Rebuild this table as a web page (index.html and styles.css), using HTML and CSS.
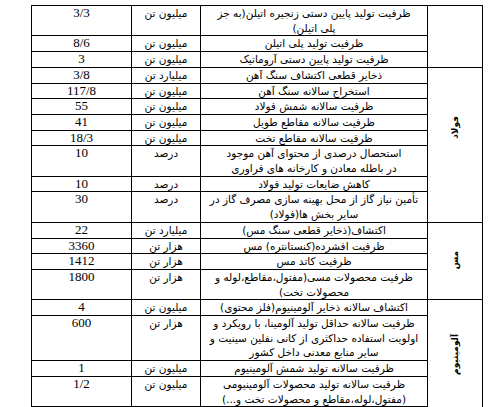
FILE: index.html
```html
<!DOCTYPE html>
<html lang="fa">
<head>
<meta charset="utf-8">
<title>جدول اهداف</title>
<link rel="stylesheet" href="styles.css">
</head>
<body>
<table class="grid" dir="rtl">
  <colgroup>
    <col class="c-cat">
    <col class="c-desc">
    <col class="c-unit">
    <col class="c-val">
  </colgroup>
  <tbody>
    <tr>
      <td class="cat" rowspan="3"></td>
      <td class="desc">ظرفیت تولید پایین دستی زنجیره اتیلن(به جز<br>پلی اتیلن)</td>
      <td class="unit">میلیون تن</td>
      <td class="val">3/3</td>
    </tr>
    <tr>
      <td class="desc">ظرفیت تولید پلی اتیلن</td>
      <td class="unit">میلیون تن</td>
      <td class="val">8/6</td>
    </tr>
    <tr>
      <td class="desc">ظرفیت تولید پایین دستی آروماتیک</td>
      <td class="unit">میلیون تن</td>
      <td class="val">3</td>
    </tr>
    <tr>
      <td class="cat cat-steel" rowspan="8"><span class="vlabel">فولاد</span></td>
      <td class="desc">ذخایر قطعی اکتشاف سنگ آهن</td>
      <td class="unit">میلیارد تن</td>
      <td class="val">3/8</td>
    </tr>
    <tr>
      <td class="desc">استخراج سالانه سنگ آهن</td>
      <td class="unit">میلیون تن</td>
      <td class="val">117/8</td>
    </tr>
    <tr>
      <td class="desc">ظرفیت سالانه شمش فولاد</td>
      <td class="unit">میلیون تن</td>
      <td class="val">55</td>
    </tr>
    <tr>
      <td class="desc">ظرفیت سالانه مقاطع طویل</td>
      <td class="unit">میلیون تن</td>
      <td class="val">41</td>
    </tr>
    <tr>
      <td class="desc">ظرفیت سالانه مقاطع تخت</td>
      <td class="unit">میلیون تن</td>
      <td class="val">18/3</td>
    </tr>
    <tr>
      <td class="desc">استحصال درصدی از محتوای آهن موجود<br>در باطله معادن و کارخانه های فراوری</td>
      <td class="unit">درصد</td>
      <td class="val">10</td>
    </tr>
    <tr>
      <td class="desc">کاهش ضایعات تولید فولاد</td>
      <td class="unit">درصد</td>
      <td class="val">10</td>
    </tr>
    <tr>
      <td class="desc">تأمین نیاز گاز از محل بهینه سازی مصرف گاز در<br>سایر بخش ها(فولاد)</td>
      <td class="unit">درصد</td>
      <td class="val">30</td>
    </tr>
    <tr>
      <td class="cat" rowspan="4"><span class="vlabel">مس</span></td>
      <td class="desc">اکتشاف(ذخایر قطعی سنگ مس)</td>
      <td class="unit">میلیارد تن</td>
      <td class="val">22</td>
    </tr>
    <tr>
      <td class="desc">ظرفیت افشرده(کنستانتره) مس</td>
      <td class="unit">هزار تن</td>
      <td class="val">3360</td>
    </tr>
    <tr>
      <td class="desc">ظرفیت کاتد مس</td>
      <td class="unit">هزار تن</td>
      <td class="val">1412</td>
    </tr>
    <tr>
      <td class="desc">ظرفیت محصولات مسی(مفتول،مقاطع،لوله و<br>محصولات تخت)</td>
      <td class="unit">هزار تن</td>
      <td class="val">1800</td>
    </tr>
    <tr>
      <td class="cat cat-alu" rowspan="5"><span class="vlabel">آلومینیوم</span></td>
      <td class="desc">اکتشاف سالانه ذخایر آلومینیوم(فلز محتوی)</td>
      <td class="unit">میلیون تن</td>
      <td class="val">4</td>
    </tr>
    <tr>
      <td class="desc">ظرفیت سالانه حداقل تولید آلومینا، با رویکرد و<br>اولویت استفاده حداکثری از کانی نفلین سینیت و<br>سایر منابع معدنی داخل کشور</td>
      <td class="unit">هزار تن</td>
      <td class="val">600</td>
    </tr>
    <tr>
      <td class="desc">ظرفیت سالانه تولید شمش آلومینیوم</td>
      <td class="unit">میلیون تن</td>
      <td class="val">1</td>
    </tr>
    <tr>
      <td class="desc">ظرفیت سالانه تولید محصولات آلومینیومی<br>(مفتول،لوله،مقاطع و محصولات تخت و...)</td>
      <td class="unit">میلیون تن</td>
      <td class="val">1/2</td>
    </tr>
    <tr>
      <td class="desc">کاهش مصرف انرژی در تولید آلومینیوم</td>
      <td class="unit">درصد</td>
      <td class="val">20</td>
    </tr>
  </tbody>
</table>
</body>
</html>
```
FILE: styles.css
```css
html, body {
  margin: 0;
  padding: 0;
  background: #fff;
  overflow: hidden;
}

.grid {
  border-collapse: collapse;
  table-layout: fixed;
  width: 452px;
  margin: 5px 0 0 31px;
  color: #000;
}

.c-cat { width: 55px; }
.c-desc { width: 227px; }
.c-unit { width: 69px; }
.c-val { width: 100px; }

.grid td {
  border: 1px solid #000;
  padding: 0;
  vertical-align: top;
  text-align: center;
  line-height: 14.7px;
}

.desc,
.unit {
  font-family: "DejaVu Sans", sans-serif;
  font-size: 10.5px;
  white-space: nowrap;
}

.val {
  font-family: "Liberation Serif", "Times New Roman", serif;
  font-size: 13px;
}

.grid td.cat {
  vertical-align: middle;
}

.grid td.cat-steel {
  padding-bottom: 32px;
}

.grid td.cat-alu {
  padding-bottom: 10px;
}

.vlabel {
  display: inline-block;
  writing-mode: vertical-rl;
  transform: rotate(180deg);
  font-family: "DejaVu Sans", sans-serif;
  font-weight: bold;
  font-size: 9px;
  line-height: 10px;
}
```
